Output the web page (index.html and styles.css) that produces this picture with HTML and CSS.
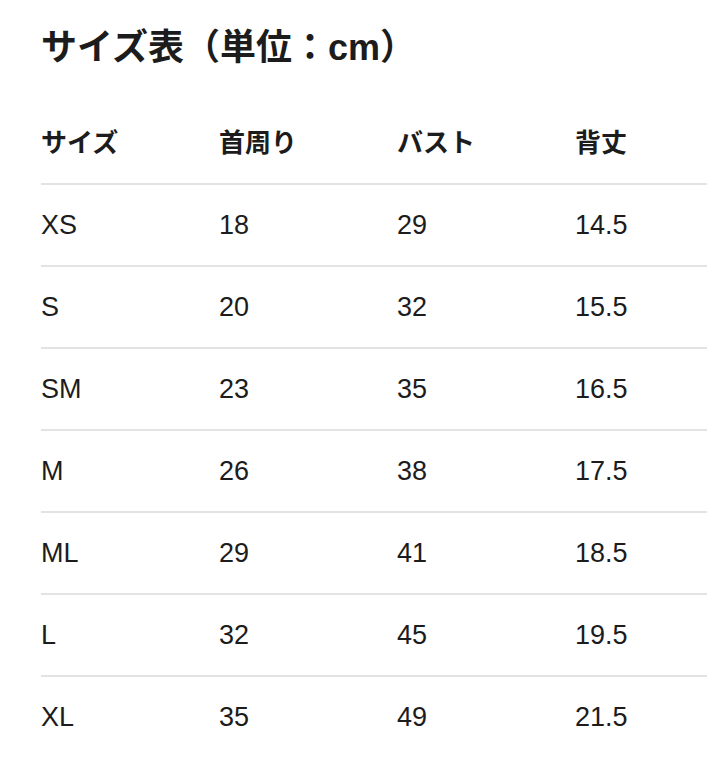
FILE: index.html
```html
<!DOCTYPE html>
<html lang="ja">
<head>
<meta charset="utf-8">
<link rel="stylesheet" href="styles.css">
</head>
<body>
<main class="page">
  <h1 class="title">サイズ表（単位：cm）</h1>
  <table class="size-table">
    <thead>
      <tr><th>サイズ</th><th>首周り</th><th>バスト</th><th>背丈</th></tr>
    </thead>
    <tbody>
      <tr><td>XS</td><td>18</td><td>29</td><td>14.5</td></tr>
      <tr><td>S</td><td>20</td><td>32</td><td>15.5</td></tr>
      <tr><td>SM</td><td>23</td><td>35</td><td>16.5</td></tr>
      <tr><td>M</td><td>26</td><td>38</td><td>17.5</td></tr>
      <tr><td>ML</td><td>29</td><td>41</td><td>18.5</td></tr>
      <tr><td>L</td><td>32</td><td>45</td><td>19.5</td></tr>
      <tr><td>XL</td><td>35</td><td>49</td><td>21.5</td></tr>
    </tbody>
  </table>
</main>
</body>
</html>
```

FILE: styles.css
```css
html, body {
  margin: 0;
  padding: 0;
  background: #ffffff;
}
body {
  font-family: "Liberation Sans", "Noto Sans CJK JP", sans-serif;
  color: #1c1c1c;
}
.page {
  padding: 0 18px 0 41px;
}
.title {
  margin: 0;
  padding-top: 28px;
  height: 101px;
  box-sizing: border-box;
  font-size: 36px;
  line-height: 40px;
  font-weight: 700;
  letter-spacing: 0;
}
.size-table {
  width: 666px;
  border-collapse: collapse;
  table-layout: fixed;
}
.size-table th,
.size-table td {
  width: 178px;
  height: 80px;
  padding: 0;
  text-align: left;
  vertical-align: middle;
  font-size: 27px;
  line-height: 30px;
}
.size-table th:last-child,
.size-table td:last-child {
  width: 132px;
}
.size-table th {
  font-size: 26px;
  font-weight: 700;
  padding-top: 2px;
}
.size-table thead tr,
.size-table tbody tr {
  border-bottom: 2px solid #e3e3e3;
}
.size-table tbody tr:last-child {
  border-bottom: none;
}
```
